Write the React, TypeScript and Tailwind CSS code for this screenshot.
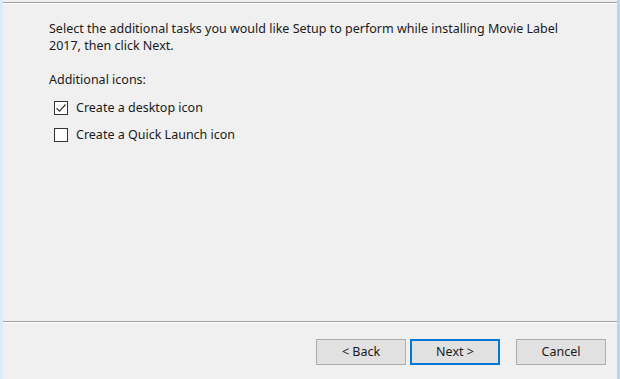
import React from "react";

function Check({ checked }: { checked: boolean }) {
  return (
    <div className="w-[14px] h-[14px] border border-[#333333] bg-white flex items-center justify-center shrink-0">
      {checked && (
        <svg width="12" height="12" viewBox="0 0 12 12">
          <path d="M1.5 6.2 L4.5 9.2 L10.5 2.5" fill="none" stroke="#333333" strokeWidth="1.2" />
        </svg>
      )}
    </div>
  );
}

function Btn({ label, primary }: { label: string; primary?: boolean }) {
  return (
    <div
      className={
        "w-[90px] h-[26px] flex items-center justify-center bg-[#e1e1e1] text-[12.5px] text-[#1a1a1a] " +
        (primary ? "border-2 border-[#0078d7]" : "border border-[#adadad]")
      }
    >
      {label}
    </div>
  );
}

export default function App() {
  return (
    <div
      className="w-[620px] h-[379px] bg-[#f0f0f0] flex text-[#1a1a1a]"
      style={{ fontFamily: '"Noto Sans", "Liberation Sans", sans-serif' }}
    >
      <div className="w-[3px] bg-[#dcebf8]" />
      <div className="flex-1 flex flex-col">
        <div className="h-[2px]" />
        <div className="h-[1px] bg-[#a0a0a0]" />
        <div className="h-[1px] bg-white" />
        <div className="flex-1 flex flex-col pl-[46px] pt-[16px] text-[12.5px] leading-[17px]">
          <div className="w-[540px]">
            Select the additional tasks you would like Setup to perform while installing Movie Label 2017, then click Next.
          </div>
          <div className="mt-[17px]">Additional icons:</div>
          <div className="flex flex-col gap-[10px] mt-[11px] pl-[5px]">
            <div className="flex items-center gap-[8px]">
              <Check checked />
              <span>Create a desktop icon</span>
            </div>
            <div className="flex items-center gap-[8px]">
              <Check checked={false} />
              <span>Create a Quick Launch icon</span>
            </div>
          </div>
        </div>
        <div className="h-[1px] bg-[#a0a0a0]" />
        <div className="h-[1px] bg-white" />
        <div className="h-[56px] flex items-start pt-[16px] pl-[313px]">
          <Btn label="< Back" />
          <div className="w-[4px]" />
          <Btn label="Next >" primary />
          <div className="w-[16px]" />
          <Btn label="Cancel" />
        </div>
      </div>
      <div className="w-[3px] bg-[#b9d5ee]" />
    </div>
  );
}
